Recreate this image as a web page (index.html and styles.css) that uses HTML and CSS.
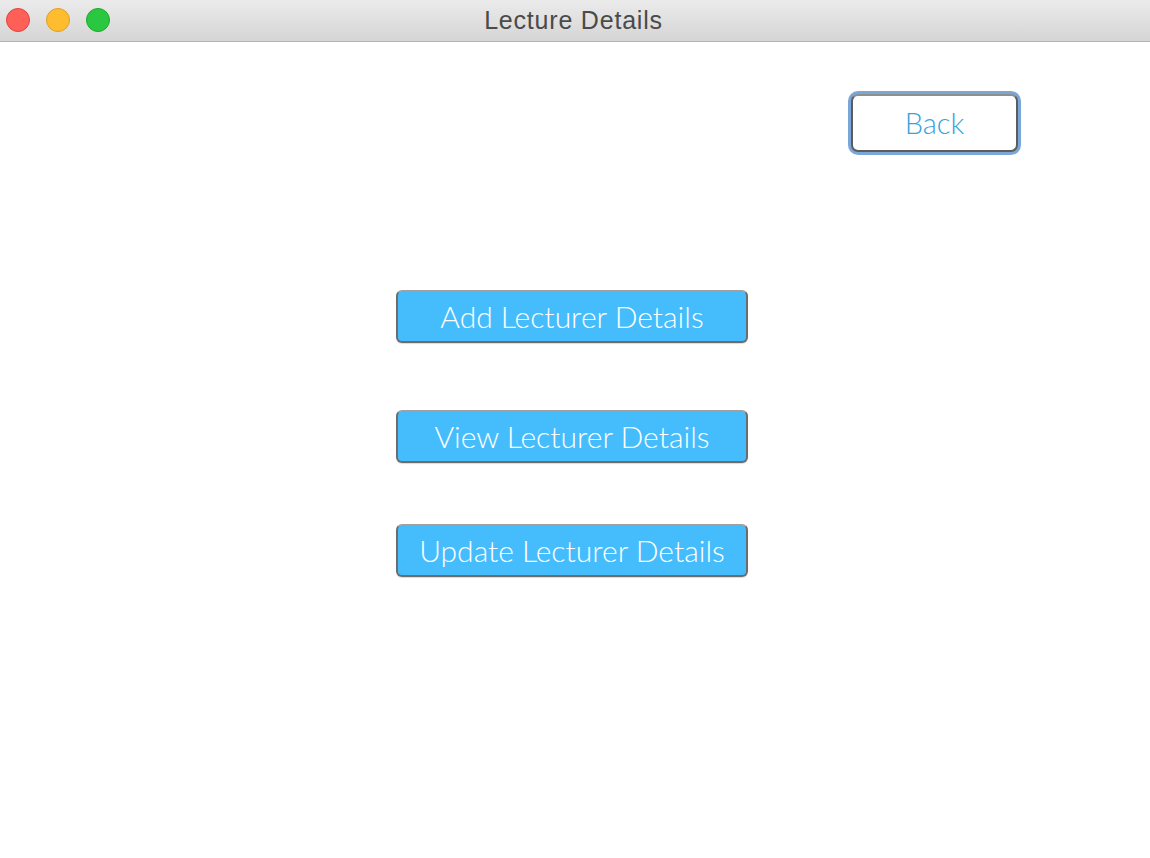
FILE: index.html
```html
<!DOCTYPE html>
<html>
<head>
<meta charset="utf-8">
<link rel="stylesheet" href="styles.css">
</head>
<body>
<div class="window">
  <header class="titlebar">
    <div class="lights">
      <span class="light red"></span>
      <span class="light yellow"></span>
      <span class="light green"></span>
    </div>
    <div class="title">Lecture Details</div>
  </header>
  <main class="content">
    <div class="top-row">
      <button class="back">Back</button>
    </div>
    <div class="actions">
      <button class="action">Add Lecturer Details</button>
      <button class="action second">View Lecturer Details</button>
      <button class="action third">Update Lecturer Details</button>
    </div>
  </main>
</div>
</body>
</html>
```

FILE: styles.css
```css
html, body {
  margin: 0;
  padding: 0;
  background: #ffffff;
}
.window {
  width: 1150px;
  height: 858px;
  display: flex;
  flex-direction: column;
  background: #ffffff;
}
.titlebar {
  position: relative;
  height: 41px;
  flex: none;
  background: linear-gradient(#ebebeb, #d5d5d5);
  border-bottom: 1px solid #b4b4b4;
  display: flex;
  align-items: center;
  justify-content: center;
}
.lights {
  position: absolute;
  left: 6px;
  top: 8px;
  display: flex;
  gap: 16px;
}
.light {
  width: 24px;
  height: 24px;
  border-radius: 50%;
  box-sizing: border-box;
  display: block;
}
.red { background: #fe5f57; border: 1px solid #e0443e; }
.yellow { background: #febc2e; border: 1px solid #dea123; }
.green { background: #29c840; border: 1px solid #1aab29; }
.title {
  font-family: "Liberation Sans", Arial, sans-serif;
  font-size: 25px;
  letter-spacing: 0.8px;
  color: #4a4a4a;
  margin-right: 3px;
}
.content {
  flex: 1;
  display: flex;
  flex-direction: column;
}
.top-row {
  display: flex;
  justify-content: flex-end;
  padding: 52px 132px 0 0;
}
button {
  font-family: Lato, "Open Sans", sans-serif;
  font-weight: 300;
  cursor: default;
}
.back {
  width: 167px;
  height: 58px;
  box-sizing: border-box;
  background: #ffffff;
  border: 2px solid #5c5c5c;
  border-top-color: #8f8f8f;
  border-radius: 7px;
  box-shadow: 0 0 0 3px #7aa7d8;
  color: #37a3db;
  font-size: 29px;
  padding: 0 0 2px 0;
}
.actions {
  display: flex;
  flex-direction: column;
  align-items: flex-start;
  padding: 138px 0 0 396px;
}
.action {
  width: 352px;
  height: 53px;
  box-sizing: border-box;
  background: #45bdfd;
  border: 2px solid #6c6c6c;
  border-top-color: #a0a0a0;
  border-radius: 6px;
  box-shadow: 0 1px 1px rgba(0,0,0,0.15);
  color: #ffffff;
  font-size: 30px;
  padding: 0 0 2px 0;
}
.second { margin-top: 67px; }
.third { margin-top: 61px; }
```
